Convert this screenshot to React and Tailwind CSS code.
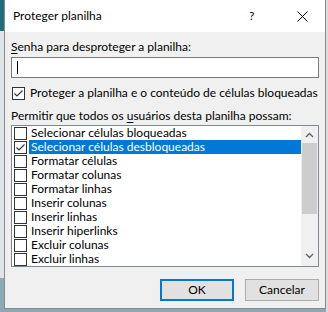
import React from "react";

const items = [
  ["Selecionar células bloqueadas", false],
  ["Selecionar células desbloqueadas", true],
  ["Formatar células", false],
  ["Formatar colunas", false],
  ["Formatar linhas", false],
  ["Inserir colunas", false],
  ["Inserir linhas", false],
  ["Inserir hiperlinks", false],
  ["Excluir colunas", false],
  ["Excluir linhas", false],
];

function Box({ checked }) {
  return (
    <div className="w-[13px] h-[13px] border border-[#333333] bg-white shrink-0 relative">
      {checked && (
        <svg width="11" height="11" viewBox="0 0 11 11" className="absolute left-0 top-0">
          <path d="M1.5 5.5 L4 8 L9.5 2.5" fill="none" stroke="#333" strokeWidth="1.1" />
        </svg>
      )}
    </div>
  );
}

export default function App() {
  return (
    <div
      className="w-[328px] h-[312px] flex overflow-hidden bg-[#8ea9b6] text-[12px] text-black"
      style={{ fontFamily: 'Lato, "Noto Sans", sans-serif' }}
    >
      <div className="w-[4px] flex flex-col shrink-0">
        <div className="h-[31px] bg-[#1f6c7c]" />
        <div className="flex-1 bg-[#dfe6ea]" />
        <div className="h-[34px] bg-[#8ea9b6]" />
      </div>
      <div className="w-[322px] h-[309px] shrink-0 border border-[#8a8a8a] border-t-0 bg-[#f0f0f0] flex flex-col">
        <div className="h-[32px] bg-white flex items-center pl-[8px] shrink-0">
          <span className="flex-1">Proteger planilha</span>
          <span className="w-[10px] mr-[38px]">?</span>
          <svg width="11" height="11" viewBox="0 0 11 11" className="mr-[17px]">
            <path d="M0.5 0.5 L10.5 10.5 M10.5 0.5 L0.5 10.5" stroke="#000" strokeWidth="1" />
          </svg>
        </div>
        <div className="px-[6px] flex flex-col">
          <div className="mt-[7px] h-[15px] leading-[15px]">
            <span className="underline underline-offset-2">S</span>enha para desproteger a planilha:
          </div>
          <div className="mt-[3px] h-[21px] border border-[#7a7a7a] bg-white flex items-center pl-[5px]">
            <div className="w-px h-[13px] bg-black" />
          </div>
          <div className="mt-[7px] h-[16px] flex items-center gap-[5px] pl-[1px]">
            <Box checked />
            <span className="whitespace-nowrap">Proteger a planilha e o conteúdo de células bloqueadas</span>
          </div>
          <div className="mt-[7px] h-[16px] leading-[16px] whitespace-nowrap">
            Permitir que todos os <span className="underline underline-offset-2">u</span>suários desta planilha possam:
          </div>
          <div className="mt-[1px] h-[142px] border border-[#828790] bg-white flex overflow-hidden">
            <div className="flex-1 flex flex-col">
              {items.map(([t, sel], i) => (
                <div key={i} className="h-[14px] flex items-center shrink-0">
                  <div className="pl-[2px] pr-[2px] flex items-center">
                    <Box checked={sel} />
                  </div>
                  <div
                    className={
                      "flex-1 h-[14px] leading-[14px] pl-[2px] whitespace-nowrap " +
                      (sel ? "bg-[#0078d7] text-white" : "")
                    }
                  >
                    {t}
                  </div>
                </div>
              ))}
            </div>
            <div className="w-[17px] bg-[#f0f0f0] flex flex-col shrink-0">
              <div className="h-[17px] flex items-center justify-center">
                <svg width="9" height="6" viewBox="0 0 9 6">
                  <path d="M1 5 L4.5 1.5 L8 5" fill="none" stroke="#606060" strokeWidth="1.3" />
                </svg>
              </div>
              <div className="h-[71px] mx-[1px] bg-[#cdcdcd]" />
              <div className="flex-1" />
              <div className="h-[17px] flex items-center justify-center mb-[2px]">
                <svg width="9" height="6" viewBox="0 0 9 6">
                  <path d="M1 1 L4.5 4.5 L8 1" fill="none" stroke="#606060" strokeWidth="1.3" />
                </svg>
              </div>
            </div>
          </div>
          <div className="mt-[12px] flex justify-end gap-[11px]">
            <div className="w-[74px] h-[22px] border-2 border-[#0078d7] bg-[#e1e1e1] flex items-center justify-center">
              OK
            </div>
            <div className="w-[74px] h-[22px] border border-[#adadad] bg-[#e1e1e1] flex items-center justify-center">
              Cancelar
            </div>
          </div>
        </div>
      </div>
      <div className="flex-1 bg-[#dcdcdc]" />
    </div>
  );
}
